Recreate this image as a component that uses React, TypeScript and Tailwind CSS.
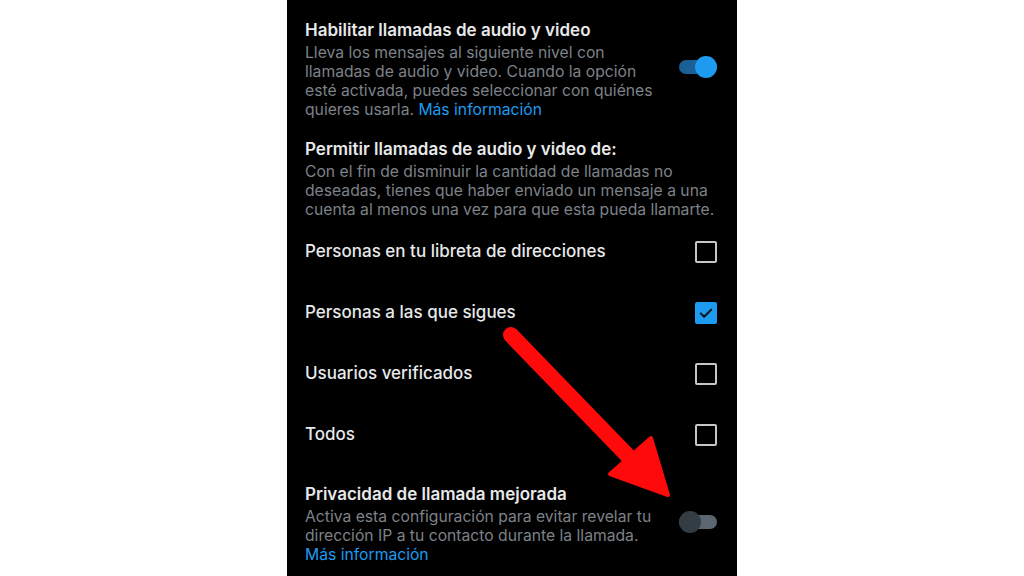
const font = { fontFamily: "Inter, 'Noto Sans', sans-serif" }

function Toggle({ on }: { on: boolean }) {
  return (
    <div className="relative mb-[4px] h-[22px] w-[38px] shrink-0">
      <div
        className={`absolute left-0 right-0 top-[4px] h-[14px] rounded-full ${
          on ? 'bg-[#1a5f96]' : 'bg-[#5b6670]'
        }`}
      />
      <div
        className={`absolute top-0 h-[22px] w-[22px] rounded-full ${
          on ? 'right-0 bg-[#1d9bf0]' : 'left-0 bg-[#343c44]'
        }`}
      />
    </div>
  )
}

function Checkbox({ checked }: { checked: boolean }) {
  if (checked) {
    return (
      <div className="flex h-[22px] w-[22px] shrink-0 items-center justify-center rounded-[2px] bg-[#1d9bf0]">
        <svg width="18" height="18" viewBox="0 0 24 24" fill="none">
          <path d="M5 12.5l4.5 4.5L19 7.5" stroke="#0f1419" strokeWidth="2.8" strokeLinecap="round" strokeLinejoin="round" />
        </svg>
      </div>
    )
  }
  return <div className="h-[22px] w-[22px] shrink-0 rounded-[2px] border-2 border-[#c4c7c9]" />
}

export default function App() {
  const options = [
    { label: 'Personas en tu libreta de direcciones', checked: false },
    { label: 'Personas a las que sigues', checked: true },
    { label: 'Usuarios verificados', checked: false },
    { label: 'Todos', checked: false },
  ]

  return (
    <div className="relative h-[576px] w-[1024px] overflow-hidden bg-white" style={font}>
      <div className="mx-auto h-full w-[450px] bg-black pl-[18px] pr-[20px] pt-[19px]">
        {/* audio / video calls switch */}
        <div className="flex items-center gap-4">
          <div className="flex-1">
            <div className="text-[17px] font-semibold leading-[22px] text-[#e7e9ea]">
              Habilitar llamadas de audio y video
            </div>
            <p className="mt-[2px] text-[15.7px] leading-[19px] text-[#7d8288]">
              Lleva los mensajes al siguiente nivel con llamadas de audio y video. Cuando la opción esté activada, puedes seleccionar con quiénes quieres usarla.{' '}
              <span className="text-[#1d9bf0]">Más información</span>
            </p>
          </div>
          <Toggle on />
        </div>

        {/* who can call */}
        <div className="mt-[19px]">
          <div className="text-[17px] font-semibold leading-[22px] text-[#e7e9ea]">
            Permitir llamadas de audio y video de:
          </div>
          <p className="mt-[2px] text-[15.7px] leading-[19px] text-[#7d8288]">
            Con el fin de disminuir la cantidad de llamadas no deseadas, tienes que haber enviado un mensaje a una cuenta al menos una vez para que esta pueda llamarte.
          </p>
        </div>
        <div className="mt-[2px] flex flex-col">
          {options.map((o) => (
            <div key={o.label} className="flex h-[61px] items-center justify-between">
              <span className="text-[17px] font-medium text-[#e7e9ea]">{o.label}</span>
              <Checkbox checked={o.checked} />
            </div>
          ))}
        </div>

        {/* enhanced call privacy */}
        <div className="mt-[18px] flex items-center gap-4">
          <div className="flex-1">
            <div className="text-[17px] font-semibold leading-[22px] text-[#e7e9ea]">
              Privacidad de llamada mejorada
            </div>
            <p className="mt-[2px] text-[15.7px] leading-[19px] text-[#7d8288]">
              Activa esta configuración para evitar revelar tu dirección IP a tu contacto durante la llamada.
              <br />
              <span className="text-[#1d9bf0]">Más información</span>
            </p>
          </div>
          <Toggle on={false} />
        </div>
      </div>

      {/* red pointer arrow */}
      <svg className="pointer-events-none absolute left-0 top-0" width="1024" height="576" viewBox="0 0 1024 576">
        <line x1="511" y1="335" x2="628" y2="456" stroke="#ff0a0a" strokeWidth="16" strokeLinecap="round" />
        <polygon points="610,474 651,438 668,495" fill="#ff0a0a" stroke="#ff0a0a" strokeWidth="4" strokeLinejoin="round" />
      </svg>
    </div>
  )
}
